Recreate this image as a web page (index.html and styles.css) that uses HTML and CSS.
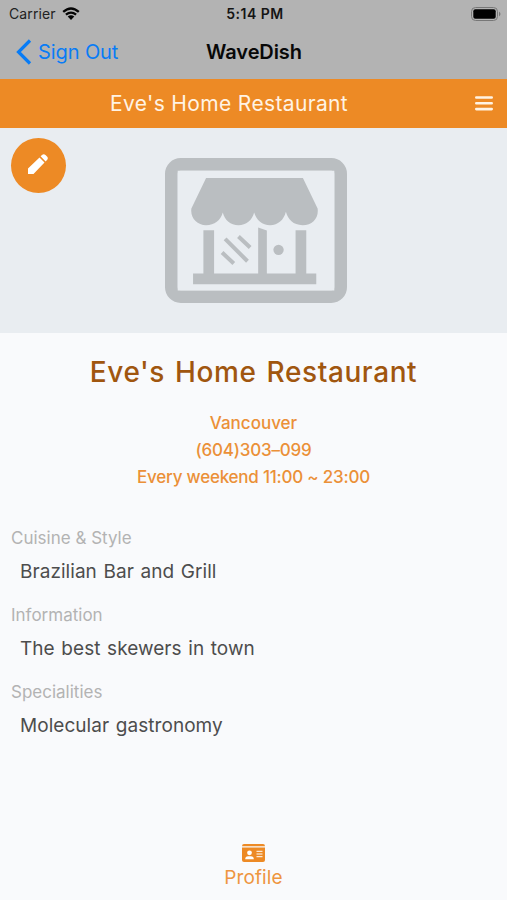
FILE: index.html
```html
<!DOCTYPE html>
<html lang="en">
  <head>
    <meta charset="UTF-8" />
    <meta name="viewport" content="width=device-width, initial-scale=1.0" />
    <title>WaveDish</title>
    <link rel="stylesheet" href="styles.css">
  </head>
  <body>
    <header class="top">
      <div class="status-bar">
        <div class="carrier">
          <span>Carrier</span>
          <svg class="wifi" viewBox="0 0 18 13">
            <path d="M1.2 4.9Q9-2 16.8 4.9M3.9 7.7Q9 3.5 14.1 7.7" fill="none" stroke="#050505" stroke-width="2.3" />
            <path d="M5.7 9.6Q9 7.1 12.3 9.6L9 13z" fill="#050505" />
          </svg>
        </div>
        <span class="time">5:14 PM</span>
        <svg class="battery" viewBox="0 0 30 14">
          <rect x="0.5" y="0.5" width="26" height="13" rx="4" fill="none" stroke="#777" />
          <rect x="2.3" y="2.3" width="22.4" height="9.4" rx="2" fill="#000" />
          <path d="M28 4.5q3 2.5 0 5z" fill="#777" />
        </svg>
      </div>
      <nav class="nav-bar">
        <a class="back">
          <svg class="chevron" viewBox="0 0 16 26">
            <path d="M14 1.5L2.5 13 14 24.5" fill="none" stroke="#087cf6" stroke-width="3.2" />
          </svg>
          <span>Sign Out</span>
        </a>
        <h1 class="app-name">WaveDish</h1>
      </nav>
    </header>

    <div class="title-bar">
      <span class="title-text">Eve's Home Restaurant</span>
      <svg class="menu" viewBox="0 0 18 15">
        <path d="M1.3 1.5h15.4M1.3 7.3h15.4M1.3 13.1h15.4" stroke="#fff3e4" stroke-width="2.6" stroke-linecap="round" />
      </svg>
    </div>

    <div class="photo">
      <button class="edit">
        <svg class="pencil" viewBox="0 0 20 20">
          <path d="M0 20v-5.500L11.500 3.400l5 5L5.500 20zM12.600 2.300l1.400-1.300q1.700-1.500 3.500 0l1.500 1.500q1.600 1.700 0 3.500l-1.400 1.400z" fill="#fff" />
        </svg>
      </button>
      <svg class="store" viewBox="30 39 545 434">
        <rect x="49" y="58" width="507" height="396" rx="28" fill="none" stroke="#babec1" stroke-width="38" />
        <path d="M68 77h469v359H68z" fill="#e9edf1" />
        <g fill="#babec1">
          <path d="M153 99H443L487 190C491 218 472 240 442 240C414 240 398 223 392 200C386 225 368 240 345 240C321 240 304 225 297 202C291 225 273 240 250 240C226 240 209 225 203 202C197 225 178 240 153 240C126 240 105 218 109 190Z" />
          <path d="M145 255h32v130h132V247l26 9v129h86V255h32v130h30v32H114v-32h31z" />
          <circle cx="370" cy="314" r="15.5" />
        </g>
        <path d="M250 274l35 33M210 281l67 67M201 322l35 33" stroke="#babec1" stroke-width="12" />
      </svg>
    </div>

    <main class="profile">
      <h2 class="name">Eve's Home Restaurant</h2>
      <div class="contact">
        <p>Vancouver</p>
        <p class="phone">(604)303–099</p>
        <p class="hours">Every weekend 11:00 ~ 23:00</p>
      </div>
      <dl class="details">
        <dt>Cuisine &amp; Style</dt>
        <dd>Brazilian Bar and Grill</dd>
        <dt>Information</dt>
        <dd>The best skewers in town</dd>
        <dt>Specialities</dt>
        <dd>Molecular gastronomy</dd>
      </dl>
    </main>

    <footer class="tab-bar">
      <a class="tab">
        <svg class="card" viewBox="0 0 23 18">
          <path d="M0 2.2Q0 0 2 0h19q2 0 2 2.2z" fill="#ed8a25" />
          <path d="M0 3.6h23V16q0 2-2 2H2q-2 0-2-2z" fill="#ed8a25" />
          <circle cx="7.5" cy="8.8" r="2.4" fill="#fff" />
          <path d="M3.2 15.2q0-3 3-3h2.600q3 0 3 3z" fill="#fff" />
          <path d="M14.5 7.3h6M14.5 10h6M14.5 12.7h6" stroke="#fff" />
        </svg>
        <span>Profile</span>
      </a>
    </footer>
  </body>
</html>
```

FILE: styles.css
```css
* {
  box-sizing: border-box;
}
body {
  display: flex;
  flex-direction: column;
  height: 900px;
  margin: 0;
  overflow: hidden;
  background-color: #f9fafc;
  font-family: Inter, "Liberation Sans", sans-serif;
}
h1,
h2,
p,
dl,
dd {
  margin: 0;
}
svg {
  display: block;
}
.top {
  height: 79px;
  background-color: #b3b3b3;
}
.status-bar {
  display: grid;
  grid-template-columns: 1fr auto 1fr;
  align-items: center;
  height: 27px;
  padding: 0 6px 0 9px;
  font-size: 14px;
  color: #222;
}
.carrier {
  display: flex;
  align-items: center;
  gap: 6px;
  letter-spacing: 0.1px;
}
.wifi {
  width: 18px;
  height: 13px;
}
.time {
  font-size: 14px;
  font-weight: 600;
  letter-spacing: 0.5px;
  color: #151515;
}
.battery {
  justify-self: end;
  width: 30px;
  height: 14px;
}
.nav-bar {
  display: grid;
  grid-template-columns: 1fr auto 1fr;
  align-items: center;
  height: 50px;
  padding: 0 15px 0 16px;
}
.back {
  display: flex;
  align-items: center;
  gap: 6px;
  font-size: 20px;
  letter-spacing: -0.1px;
  color: #087cf6;
}
.chevron {
  width: 16px;
  height: 26px;
}
.app-name {
  font-size: 20px;
  font-weight: 600;
  letter-spacing: -0.1px;
  color: #080808;
}
.title-bar {
  display: flex;
  align-items: center;
  height: 49px;
  padding-right: 14px;
  background-color: #ed8a25;
}
.title-text {
  flex: 1;
  padding-left: 110px;
  font-size: 21px;
  letter-spacing: 0.35px;
  color: #fff3e4;
}
.menu {
  width: 18px;
  height: 15px;
}
.photo {
  position: relative;
  display: flex;
  justify-content: center;
  height: 205px;
  padding-top: 30px;
  padding-left: 4px;
  background-color: #e9edf1;
}
/* round edit button over the photo */
.edit {
  position: absolute;
  top: 10px;
  left: 11px;
  display: flex;
  align-items: center;
  justify-content: center;
  width: 55px;
  height: 55px;
  padding: 0 1px 3px 0;
  border: none;
  border-radius: 50%;
  background-color: #ed8a25;
}
.pencil {
  width: 20px;
  height: 20px;
}
.store {
  width: 182px;
  height: 145px;
}
.profile {
  flex: 1;
  padding: 19px 11px 0;
}
.name {
  font-size: 28px;
  font-weight: 500;
  line-height: 40px;
  letter-spacing: 0.6px;
  word-spacing: 2px;
  text-align: center;
  color: #a0560f;
}
.contact {
  margin-top: 18px;
  font-size: 17px;
  font-weight: 500;
  line-height: 27px;
  text-align: center;
  color: #eb9038;
}
.phone,
.hours {
  letter-spacing: -0.22px;
}
.details {
  margin-top: 34px;
}
.details dt {
  font-size: 17px;
  line-height: 27px;
  color: #b3b3b3;
}
.details dd {
  margin-bottom: 10px;
  padding-left: 9px;
  font-size: 19px;
  line-height: 40px;
  letter-spacing: 0.05px;
  word-spacing: 1.2px;
  color: #4d4d4d;
}
.tab-bar {
  display: flex;
  justify-content: center;
  height: 56px;
}
.tab {
  display: flex;
  flex-direction: column;
  align-items: center;
  gap: 4px;
  font-size: 19px;
  line-height: 24px;
  letter-spacing: 0.1px;
  color: #ee9540;
}
.card {
  width: 23px;
  height: 18px;
}
```
